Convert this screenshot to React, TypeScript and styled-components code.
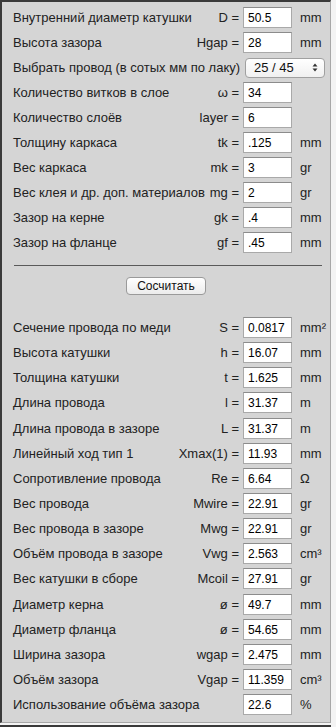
import styled, { createGlobalStyle } from "styled-components";

type Field = {
  label: string;
  sym?: string;
  value: string;
  unit?: string;
};

const inputs: Field[] = [
  { label: "Внутренний диаметр катушки", sym: "D =", value: "50.5", unit: "mm" },
  { label: "Высота зазора", sym: "Hgap =", value: "28", unit: "mm" },
];

const inputs2: Field[] = [
  { label: "Количество витков в слое", sym: "ω =", value: "34" },
  { label: "Количество слоёв", sym: "layer =", value: "6" },
  { label: "Толщину каркаса", sym: "tk =", value: ".125", unit: "mm" },
  { label: "Вес каркаса", sym: "mk =", value: "3", unit: "gr" },
  { label: "Вес клея и др. доп. материалов", sym: "mg =", value: "2", unit: "gr" },
  { label: "Зазор на керне", sym: "gk =", value: ".4", unit: "mm" },
  { label: "Зазор на фланце", sym: "gf =", value: ".45", unit: "mm" },
];

const results: Field[] = [
  { label: "Сечение провода по меди", sym: "S =", value: "0.0817", unit: "mm²" },
  { label: "Высота катушки", sym: "h =", value: "16.07", unit: "mm" },
  { label: "Толщина катушки", sym: "t =", value: "1.625", unit: "mm" },
  { label: "Длина провода", sym: "l =", value: "31.37", unit: "m" },
  { label: "Длина провода в зазоре", sym: "L =", value: "31.37", unit: "m" },
  { label: "Линейный ход тип 1", sym: "Xmax(1) =", value: "11.93", unit: "mm" },
  { label: "Сопротивление провода", sym: "Re =", value: "6.64", unit: "Ω" },
  { label: "Вес провода", sym: "Mwire =", value: "22.91", unit: "gr" },
  { label: "Вес провода в зазоре", sym: "Mwg =", value: "22.91", unit: "gr" },
  { label: "Объём провода в зазоре", sym: "Vwg =", value: "2.563", unit: "cm³" },
  { label: "Вес катушки в сборе", sym: "Mcoil =", value: "27.91", unit: "gr" },
  { label: "Диаметр керна", sym: "ø =", value: "49.7", unit: "mm" },
  { label: "Диаметр фланца", sym: "ø =", value: "54.65", unit: "mm" },
  { label: "Ширина зазора", sym: "wgap =", value: "2.475", unit: "mm" },
  { label: "Объём зазора", sym: "Vgap =", value: "11.359", unit: "cm³" },
  { label: "Использование объёма зазора", value: "22.6", unit: "%" },
];

function FieldRow({ f }: { f: Field }) {
  return (
    <Row>
      <Label>{f.label}</Label>
      {f.sym && <Sym>{f.sym}</Sym>}
      <Input defaultValue={f.value} />
      <Unit>{f.unit}</Unit>
    </Row>
  );
}

export default function App() {
  return (
    <>
      <GlobalStyle />
      <Panel>
        {inputs.map((f) => (
          <FieldRow key={f.label} f={f} />
        ))}
        <Row>
          <Label>Выбрать провод (в сотых мм по лаку)</Label>
          <Select>
            <span>25 / 45</span>
            <Arrows aria-hidden="true">
              <svg width="6" height="9" viewBox="0 0 6 9">
                <path d="M0.5 3.5 L3 0.5 L5.5 3.5 Z" fill="#333" />
                <path d="M0.5 5.5 L3 8.5 L5.5 5.5 Z" fill="#333" />
              </svg>
            </Arrows>
          </Select>
        </Row>
        {inputs2.map((f) => (
          <FieldRow key={f.label} f={f} />
        ))}
        <Divider />
        <ButtonBar>
          <CalcButton>Сосчитать</CalcButton>
        </ButtonBar>
        <Results>
          {results.map((f) => (
            <FieldRow key={f.label} f={f} />
          ))}
        </Results>
      </Panel>
      <NextPanel />
    </>
  );
}

const GlobalStyle = createGlobalStyle`
  body {
    margin: 0;
    background: #f4f4f4;
    font-family: "Liberation Sans", Arial, sans-serif;
  }
`;

const Panel = styled.div`
  width: 331px;
  box-sizing: border-box;
  background: #d5d5d5;
  border-top: 2px solid #3a3a3a;
  border-left: 2px solid #3a3a3a;
  border-right: 1px solid #a8a8a8;
  border-bottom: 1px solid #a8a8a8;
  padding: 3px 0 5px 11px;
  font-size: 13px;
  color: #222;
`;

const Row = styled.div`
  display: flex;
  align-items: center;
  height: 25px;
`;

const Label = styled.span`
  flex: 1;
  white-space: nowrap;
`;

const Sym = styled.span`
  margin-right: 4px;
  white-space: nowrap;
`;

const Input = styled.input`
  box-sizing: border-box;
  width: 49px;
  height: 21px;
  margin: 0;
  padding: 1px 3px 0 4px;
  border: 1px solid #a9a9a9;
  border-top-color: #8c8c8c;
  background: #fff;
  font-family: "Liberation Sans", Arial, sans-serif;
  font-size: 12px;
  color: #000;
  outline: none;
`;

const Unit = styled.span`
  width: 30px;
  margin-left: 8px;
  white-space: nowrap;
`;

const Select = styled.div`
  box-sizing: border-box;
  display: flex;
  align-items: center;
  justify-content: space-between;
  width: 80px;
  height: 20px;
  margin-right: 5px;
  padding: 0 6px 0 8px;
  border: 1px solid #a0a0a0;
  border-radius: 4px;
  background: linear-gradient(#ffffff, #f0f0f0);
  font-size: 13px;
  color: #111;
`;

const Arrows = styled.span`
  display: flex;
  align-items: center;
`;

const Divider = styled.div`
  height: 1px;
  margin: 10px 8px 0 1px;
  background: #5a5a5a;
`;

const ButtonBar = styled.div`
  display: flex;
  justify-content: center;
  padding: 11px 11px 0 0;
`;

const CalcButton = styled.button`
  box-sizing: border-box;
  width: 80px;
  height: 18px;
  padding: 0;
  border: 1px solid #9a9a9a;
  border-radius: 4px;
  background: linear-gradient(#ffffff, #ececec);
  font-family: "Liberation Sans", Arial, sans-serif;
  font-size: 12px;
  color: #111;
`;

const Results = styled.div`
  margin-top: 20px;

  & > div {
    height: 25.15px;
  }
`;

const NextPanel = styled.div`
  margin-top: 2px;
  height: 6px;
  width: 331px;
  border-top: 2px solid #3a3a3a;
  border-left: 2px solid #3a3a3a;
  box-sizing: border-box;
  background: #d5d5d5;
`;
